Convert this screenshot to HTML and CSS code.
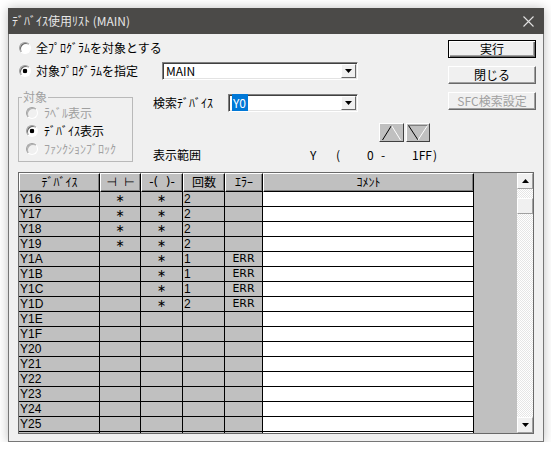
FILE: index.html
```html
<!DOCTYPE html>
<html lang="ja">
<head>
  <meta charset="UTF-8">
  <meta name="viewport" content="width=device-width, initial-scale=1.0">
  <title>ﾃﾞﾊﾞｲｽ使用ﾘｽﾄ</title>
  <link rel="stylesheet" href="styles.css">
</head>
<body>
  <div class="window">
    <!-- Barre de titre -->
    <div class="titlebar">
      <span class="title">ﾃﾞﾊﾞｲｽ使用ﾘｽﾄ (MAIN)</span>
      <svg class="close" width="11" height="11" viewBox="0 0 11 11"><path d="M0.5 0.5L10.5 10.5M10.5 0.5L0.5 10.5" stroke="#e2e2e2" stroke-width="1.1" fill="none"/></svg>
    </div>

    <div class="client">
      <div class="top">
        <div class="left">
          <div class="row1">
            <span class="radio">全ﾌﾟﾛｸﾞﾗﾑを対象とする</span>
          </div>
          <div class="row2">
            <span class="radio checked prog">対象ﾌﾟﾛｸﾞﾗﾑを指定</span>
            <div class="combo combo-main">
              <span class="value">MAIN</span>
              <span class="drop"><svg width="7" height="4" viewBox="0 0 7 4"><path d="M0 0H7L3.5 4Z" fill="#000"/></svg></span>
            </div>
          </div>

          <div class="lower">
            <fieldset class="group">
              <legend>対象</legend>
              <span class="radio disabled">ﾗﾍﾞﾙ表示</span>
              <span class="radio checked">ﾃﾞﾊﾞｲｽ表示</span>
              <span class="radio disabled">ﾌｧﾝｸｼｮﾝﾌﾞﾛｯｸ</span>
            </fieldset>

            <div class="search">
              <div class="search-row">
                <span class="search-label">検索ﾃﾞﾊﾞｲｽ</span>
                <div class="combo combo-dev">
                  <span class="value"><span class="selected">Y0</span></span>
                  <span class="drop"><svg width="7" height="4" viewBox="0 0 7 4"><path d="M0 0H7L3.5 4Z" fill="#000"/></svg></span>
                </div>
              </div>
              <div class="arrows">
                <span class="arrow">
                  <svg width="23" height="17" viewBox="0 0 23 17"><path d="M2.5 16L11.5 1.5" stroke="#000" fill="none"/><path d="M11.5 1.5L20.5 16" stroke="#fff" fill="none"/></svg>
                </span>
                <span class="arrow narrow">
                  <svg width="22" height="17" viewBox="0 0 22 17"><path d="M1.5 1.5H20.5" stroke="#808080" fill="none"/><path d="M1.5 1.5L11 16" stroke="#000" fill="none"/><path d="M11 16L20.5 1.5" stroke="#fff" fill="none"/></svg>
                </span>
              </div>
              <div class="range">
                <span>表示範囲</span>
                <span>Y</span>
                <span>(</span>
                <span>0</span>
                <span>-</span>
                <span>1FF</span>
                <span>)</span>
              </div>
            </div>
          </div>
        </div>

        <div class="buttons">
          <span class="button default">実行</span>
          <span class="button">閉じる</span>
          <span class="button disabled">SFC検索設定</span>
        </div>
      </div>

      <!-- Liste des devices -->
      <div class="list">
        <div class="grid">
          <div class="row head">
            <span>ﾃﾞﾊﾞｲｽ</span>
            <span class="spaced">⊣&nbsp;&nbsp;⊢</span>
            <span class="spaced">-(&nbsp;&nbsp;)-</span>
            <span>回数</span>
            <span>ｴﾗｰ</span>
            <span>ｺﾒﾝﾄ</span>
          </div>
          <div class="row"><span>Y16</span><span class="c">∗</span><span class="c">∗</span><span>2</span><span></span><span class="comment"></span></div>
          <div class="row"><span>Y17</span><span class="c">∗</span><span class="c">∗</span><span>2</span><span></span><span class="comment"></span></div>
          <div class="row"><span>Y18</span><span class="c">∗</span><span class="c">∗</span><span>2</span><span></span><span class="comment"></span></div>
          <div class="row"><span>Y19</span><span class="c">∗</span><span class="c">∗</span><span>2</span><span></span><span class="comment"></span></div>
          <div class="row"><span>Y1A</span><span class="c"></span><span class="c">∗</span><span>1</span><span class="c">ERR</span><span class="comment"></span></div>
          <div class="row"><span>Y1B</span><span class="c"></span><span class="c">∗</span><span>1</span><span class="c">ERR</span><span class="comment"></span></div>
          <div class="row"><span>Y1C</span><span class="c"></span><span class="c">∗</span><span>1</span><span class="c">ERR</span><span class="comment"></span></div>
          <div class="row"><span>Y1D</span><span class="c"></span><span class="c">∗</span><span>2</span><span class="c">ERR</span><span class="comment"></span></div>
          <div class="row"><span>Y1E</span><span></span><span></span><span></span><span></span><span class="comment"></span></div>
          <div class="row"><span>Y1F</span><span></span><span></span><span></span><span></span><span class="comment"></span></div>
          <div class="row"><span>Y20</span><span></span><span></span><span></span><span></span><span class="comment"></span></div>
          <div class="row"><span>Y21</span><span></span><span></span><span></span><span></span><span class="comment"></span></div>
          <div class="row"><span>Y22</span><span></span><span></span><span></span><span></span><span class="comment"></span></div>
          <div class="row"><span>Y23</span><span></span><span></span><span></span><span></span><span class="comment"></span></div>
          <div class="row"><span>Y24</span><span></span><span></span><span></span><span></span><span class="comment"></span></div>
          <div class="row"><span>Y25</span><span></span><span></span><span></span><span></span><span class="comment"></span></div>
          <div class="row"><span></span><span></span><span></span><span></span><span></span><span class="comment"></span></div>
        </div>

        <div class="vscroll">
          <span class="sbtn"><svg width="7" height="4" viewBox="0 0 7 4"><path d="M0 4H7L3.5 0Z" fill="#000"/></svg></span>
          <span class="thumb"></span>
          <span class="track"></span>
          <span class="sbtn"><svg width="7" height="4" viewBox="0 0 7 4"><path d="M0 0H7L3.5 4Z" fill="#000"/></svg></span>
        </div>
      </div>
    </div>
  </div>
</body>
</html>
```

FILE: styles.css
```css
body {
  margin: 0;
  background-color: #fff;
  color: #000;
  font-family: "Noto Sans CJK JP", sans-serif;
  font-size: 12px;
  line-height: 14px;
}

.window {
  width: 536px;
  height: 434px;
  margin: 8px 0 0 8px;
  display: flex;
  flex-direction: column;
  box-shadow: 0 0 10px rgba(0, 0, 0, 0.25);
}

.titlebar {
  height: 26px;
  flex-shrink: 0;
  background-color: #4b4a48;
  color: #e6e6e6;
  display: flex;
  align-items: center;
  justify-content: space-between;
  padding: 0 10px 0 4px;
}

.client {
  flex: 1;
  background-color: #f0f0f0;
  border: 1px solid #767676;
  border-top: none;
  padding: 6px 9px 7px 9px;
}

/* Partie haute */
.top {
  display: flex;
  height: 132px;
}
.left {
  flex: 1;
}
.buttons {
  width: 88px;
  margin-right: -2px;
  display: flex;
  flex-direction: column;
  gap: 8px;
}
.button {
  height: 18px;
  box-sizing: border-box;
  background-color: #f0f0f0;
  border: 1px solid;
  border-color: #fff #696969 #696969 #fff;
  box-shadow: inset -1px -1px #a0a0a0;
  text-align: center;
  line-height: 15px;
}
.button.default {
  border-color: #000;
  box-shadow: inset 1px 1px #fff, inset -1px -1px #696969, inset -2px -2px #a0a0a0;
}
.button.disabled {
  color: #a0a0a0;
}

/* Boutons radio */
.radio {
  display: flex;
  align-items: center;
  gap: 5px;
  padding-left: 1px;
  white-space: nowrap;
}
.radio::before {
  content: "";
  width: 12px;
  height: 12px;
  flex-shrink: 0;
  box-sizing: border-box;
  border-radius: 50%;
  border: 1px solid;
  border-color: #a0a0a0 #fff #fff #a0a0a0;
  background-color: #fff;
  box-shadow: inset 1px 1px #696969;
}
.radio.checked::before {
  background: radial-gradient(circle, #000 0 2px, #fff 2.6px);
}
.radio.disabled {
  color: #a0a0a0;
}
.radio.disabled::before {
  background: #f0f0f0;
  box-shadow: inset 1px 1px #b0b0b0;
}

.row1 {
  height: 16px;
  display: flex;
  align-items: center;
}
.row2 {
  height: 18px;
  margin-top: 6px;
  display: flex;
  align-items: center;
}
.prog {
  width: 144px;
  box-sizing: border-box;
}

/* Listes deroulantes */
.combo {
  height: 18px;
  box-sizing: border-box;
  background-color: #fff;
  border: 1px solid;
  border-color: #808080 #fff #fff #808080;
  box-shadow: inset 1px 1px #404040, inset -1px -1px #e3e3e3;
  padding: 1px;
  display: flex;
  align-items: center;
}
.combo .value {
  flex: 1;
  padding-left: 2px;
}
.combo-main {
  width: 196px;
}
.combo-dev {
  width: 130px;
}
.drop {
  width: 15px;
  height: 14px;
  box-sizing: border-box;
  background-color: #f0f0f0;
  border: 1px solid;
  border-color: #fff #696969 #696969 #fff;
  display: flex;
  align-items: center;
  justify-content: center;
}
.selected {
  background-color: #0078d7;
  color: #fff;
  padding: 0 2px 0 1px;
}

/* Groupe "対象" et recherche */
.lower {
  display: flex;
  margin-top: 10px;
}
.group {
  width: 115px;
  min-width: 0;
  box-sizing: border-box;
  margin: 0;
  padding: 0 0 3px 3px;
  border: 1px solid #b9b9b9;
}
.group legend {
  padding: 0 1px;
  color: #a0a0a0;
  line-height: 14px;
}
.group .radio {
  height: 18px;
  gap: 6px;
  margin-left: 3px;
}

.search {
  margin-left: 20px;
  display: flex;
  flex-direction: column;
}
.search-row {
  display: flex;
  align-items: center;
  margin-top: 4px;
}
.search-label {
  width: 75px;
}
.arrows {
  display: flex;
  gap: 2px;
  margin: 11px 0 0 226px;
}
.arrow {
  width: 25px;
  height: 19px;
  box-sizing: border-box;
  background-color: #c0c0c0;
  border: 1px solid;
  border-color: #fff #404040 #404040 #fff;
  display: flex;
}
.arrow.narrow {
  width: 24px;
}
.range {
  display: grid;
  grid-template-columns: 157px 26px 31px 14px 31px 21px auto;
  margin-top: 6px;
  white-space: nowrap;
}

/* Tableau */
.list {
  display: flex;
  height: 262px;
  box-sizing: border-box;
  border: 1px solid #696969;
}
.grid {
  flex: 1;
  background-color: #c0c0c0;
  overflow: hidden;
}
.row {
  display: grid;
  grid-template-columns: 81px 41px 42px 42px 38px 211px;
  height: 15px;
}
.row span {
  border-right: 1px solid #000;
  border-bottom: 1px solid #000;
  padding-left: 1px;
  font-family: "Liberation Sans", Arial, sans-serif;
  font-size: 12px;
  line-height: 14px;
  white-space: nowrap;
}
.row .c {
  text-align: center;
  padding-left: 0;
  font-family: "DejaVu Sans", sans-serif;
  font-size: 11px;
}
.row .comment {
  background-color: #fff;
}
.head {
  height: 19px;
}
.head span {
  border-top: 1px solid #fff;
  border-left: 1px solid #fff;
  box-shadow: inset -1px -1px #808080;
  padding-left: 0;
  font-family: "Noto Sans CJK JP", sans-serif;
  font-size: 12px;
  text-align: center;
  line-height: 16px;
}
.head .spaced {
  font-family: "DejaVu Sans", sans-serif;
  font-size: 12px;
}

/* Barre de defilement */
.vscroll {
  width: 16px;
  display: flex;
  flex-direction: column;
  background: repeating-conic-gradient(#fff 0 25%, #e6e6e6 0 50%) 0 0 / 2px 2px;
}
.sbtn,
.thumb {
  height: 16px;
  box-sizing: border-box;
  background-color: #f0f0f0;
  border: 1px solid;
  border-color: #fff #a0a0a0 #a0a0a0 #fff;
  display: flex;
  align-items: center;
  justify-content: center;
}
.thumb {
  margin-top: 9px;
}
.track {
  flex: 1;
}
```
